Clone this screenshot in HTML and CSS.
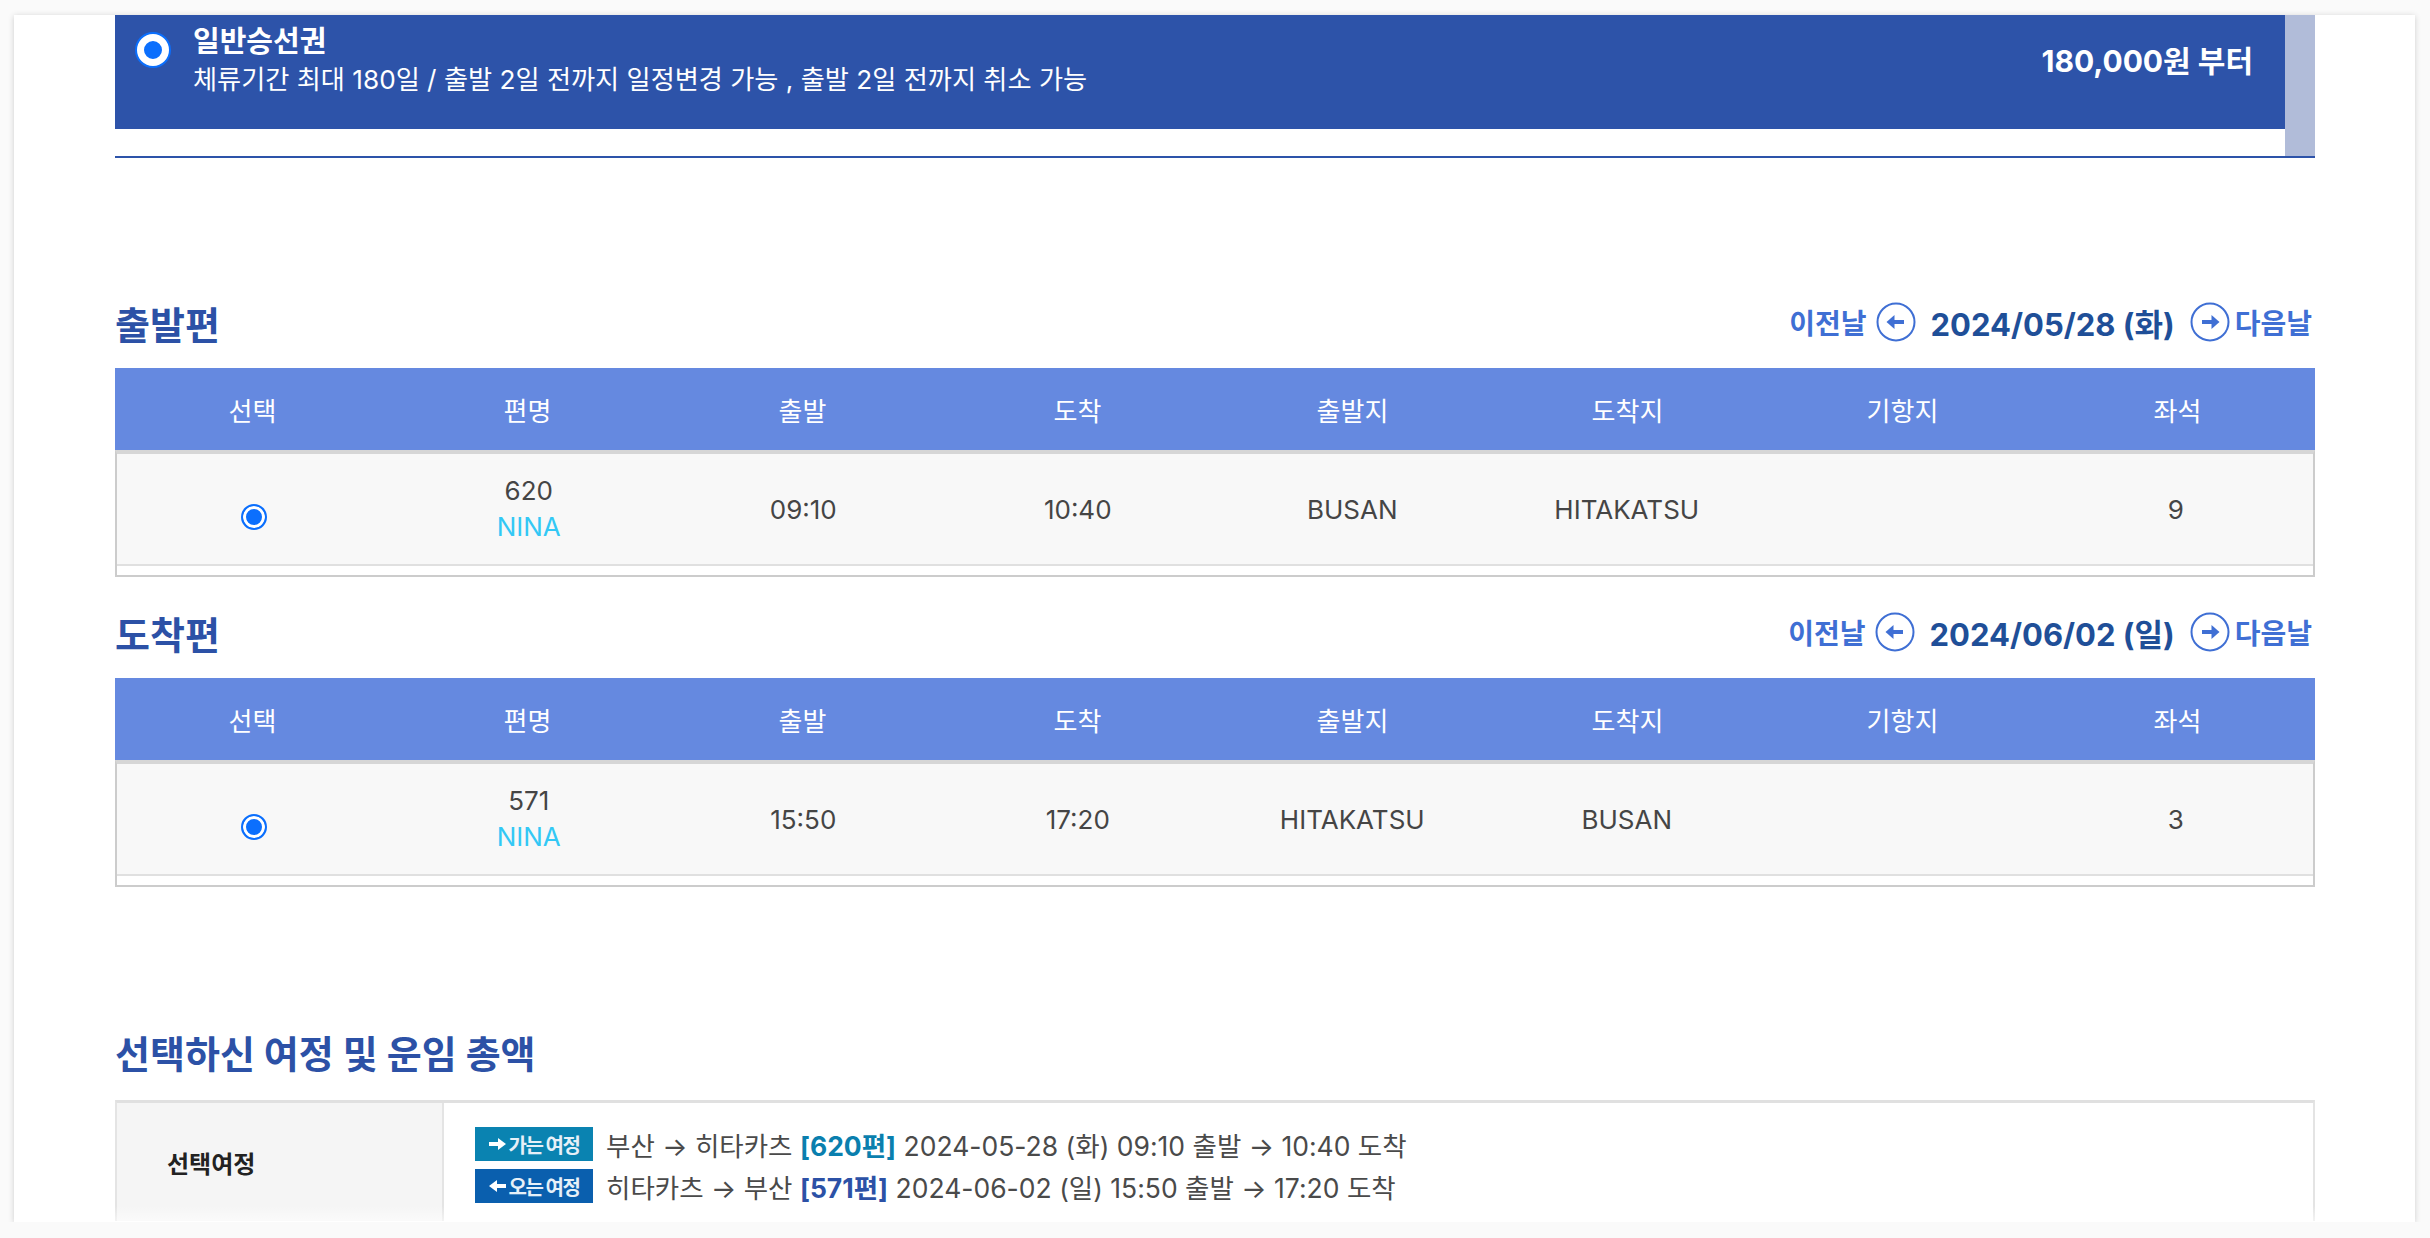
FILE: index.html
```html
<!DOCTYPE html>
<html lang="ko">
<head>
    <meta charset="UTF-8">
    <meta name="viewport" content="width=device-width, initial-scale=1.0">
    <title>승선권 예매</title>
    <link rel="stylesheet" href="styles.css">
</head>
<body>
    <div class="card">
        <div class="ticket-list">
            <div class="ticket-item">
                <span class="ticket-radio"></span>
                <div class="ticket-info">
                    <div class="ticket-title">일반승선권</div>
                    <div class="ticket-desc">체류기간 최대 180일 / 출발 2일 전까지 일정변경 가능 , 출발 2일 전까지 취소 가능</div>
                </div>
                <div class="ticket-price">180,000원 부터</div>
            </div>
            <div class="scrollbar"></div>
        </div>

        <div class="section first">
            <div class="section-head">
                <h2>출발편</h2>
                <div class="date-nav">
                    <span class="day-link prev">이전날</span>
                    <svg class="nav-icon" width="40" height="40" viewBox="0 0 40 40">
                        <circle cx="20" cy="20" r="18.5" fill="none" stroke="#3f6fd4" stroke-width="2"/>
                        <path d="M17 20H28" stroke="#3f6fd4" stroke-width="4"/>
                        <polygon points="10.5,20 18.5,13 18.5,27" fill="#3f6fd4"/>
                    </svg>
                    <span class="date">2024/05/28 (화)</span>
                    <svg class="nav-icon next" width="40" height="40" viewBox="0 0 40 40">
                        <circle cx="20" cy="20" r="18.5" fill="none" stroke="#3f6fd4" stroke-width="2"/>
                        <path d="M12 20H23" stroke="#3f6fd4" stroke-width="4"/>
                        <polygon points="29.5,20 21.5,13 21.5,27" fill="#3f6fd4"/>
                    </svg>
                    <span class="day-link">다음날</span>
                </div>
            </div>
            <div class="flight-table">
                <div class="thead">
                    <div>선택</div><div>편명</div><div>출발</div><div>도착</div>
                    <div>출발지</div><div>도착지</div><div>기항지</div><div>좌석</div>
                </div>
                <div class="tbody">
                    <div class="row">
                        <div><span class="row-radio"></span></div>
                        <div class="flight-no">620<span class="ship">NINA</span></div>
                        <div>09:10</div>
                        <div>10:40</div>
                        <div>BUSAN</div>
                        <div>HITAKATSU</div>
                        <div></div>
                        <div>9</div>
                    </div>
                </div>
            </div>
        </div>

        <div class="section">
            <div class="section-head">
                <h2>도착편</h2>
                <div class="date-nav">
                    <span class="day-link prev">이전날</span>
                    <svg class="nav-icon" width="40" height="40" viewBox="0 0 40 40">
                        <circle cx="20" cy="20" r="18.5" fill="none" stroke="#3f6fd4" stroke-width="2"/>
                        <path d="M17 20H28" stroke="#3f6fd4" stroke-width="4"/>
                        <polygon points="10.5,20 18.5,13 18.5,27" fill="#3f6fd4"/>
                    </svg>
                    <span class="date">2024/06/02 (일)</span>
                    <svg class="nav-icon next" width="40" height="40" viewBox="0 0 40 40">
                        <circle cx="20" cy="20" r="18.5" fill="none" stroke="#3f6fd4" stroke-width="2"/>
                        <path d="M12 20H23" stroke="#3f6fd4" stroke-width="4"/>
                        <polygon points="29.5,20 21.5,13 21.5,27" fill="#3f6fd4"/>
                    </svg>
                    <span class="day-link">다음날</span>
                </div>
            </div>
            <div class="flight-table">
                <div class="thead">
                    <div>선택</div><div>편명</div><div>출발</div><div>도착</div>
                    <div>출발지</div><div>도착지</div><div>기항지</div><div>좌석</div>
                </div>
                <div class="tbody">
                    <div class="row">
                        <div><span class="row-radio"></span></div>
                        <div class="flight-no">571<span class="ship">NINA</span></div>
                        <div>15:50</div>
                        <div>17:20</div>
                        <div>HITAKATSU</div>
                        <div>BUSAN</div>
                        <div></div>
                        <div>3</div>
                    </div>
                </div>
            </div>
        </div>

        <div class="section summary-section">
            <div class="section-head">
                <h2>선택하신 여정 및 운임 총액</h2>
            </div>
            <div class="summary">
                <div class="summary-label">선택여정</div>
                <div class="summary-value">
                    <div class="trip-line">
                        <span class="badge go">
                            <svg width="17" height="12" viewBox="0 0 17 12"><path d="M0 4H9V0L17 6L9 12V8H0Z" fill="#fff"/></svg>가는 여정
                        </span>
                        <span class="trip-text">부산 → 히타카츠 <b class="no-go">[620편]</b> 2024-05-28 (화) 09:10 출발 → 10:40 도착</span>
                    </div>
                    <div class="trip-line">
                        <span class="badge back">
                            <svg width="17" height="12" viewBox="0 0 17 12"><path d="M17 4H8V0L0 6L8 12V8H17Z" fill="#fff"/></svg>오는 여정
                        </span>
                        <span class="trip-text">히타카츠 → 부산 <b class="no-back">[571편]</b> 2024-06-02 (일) 15:50 출발 → 17:20 도착</span>
                    </div>
                </div>
            </div>
        </div>
    </div>
</body>
</html>
```

FILE: styles.css
```css
body {
    margin: 0;
    background-color: #fafafa;
    font-family: Inter, "Noto Sans CJK KR", sans-serif;
    color: #444;
}
.card {
    position: relative;
    margin: 15px 15px 0 14px;
    height: 1207px;
    overflow: hidden;
    background-color: #ffffff;
    box-shadow: 0 1px 6px rgba(0, 0, 0, 0.18);
    padding: 0 100px 0 101px;
    box-sizing: border-box;
}
/* soft fade where the card content is cut off */
.card::after {
    content: "";
    position: absolute;
    left: 0;
    right: 0;
    bottom: 0;
    height: 16px;
    background: linear-gradient(rgba(255, 255, 255, 0), rgba(255, 255, 255, 0.6));
}

/* selected ticket */
.ticket-list {
    display: flex;
    height: 141px;
    border-bottom: 2px solid #2d53a9;
}
.ticket-item {
    flex: 1;
    height: 114px;
    display: flex;
    align-items: flex-start;
    padding: 0 32px 0 20px;
    background-color: #2d53a9;
    color: #ffffff;
}
.scrollbar {
    width: 30px;
    background-color: #b1bcd9;
}
.ticket-radio {
    width: 32px;
    height: 32px;
    margin-top: 19px;
    flex-shrink: 0;
    border-radius: 50%;
    border: 7px solid #ffffff;
    background-color: #0b6ffd;
    box-shadow: 0 0 0 2px #0b6ffd;
    box-sizing: border-box;
    margin-left: 2px;
}
.ticket-info {
    margin-left: 24px;
    margin-top: 8px;
    flex: 1;
}
.ticket-title {
    font-size: 29px;
    font-weight: bold;
    line-height: 38px;
}
.ticket-desc {
    font-size: 26.2px;
    line-height: 36px;
    margin-top: 1px;
}
.ticket-price {
    font-size: 30px;
    font-weight: bold;
    line-height: 40px;
    margin-top: 26px;
}

/* sections */
.section {
    margin-top: 25px;
}
.section.first {
    margin-top: 134px;
}
.section.summary-section {
    margin-top: 134px;
}
.section-head {
    display: flex;
    justify-content: space-between;
    align-items: center;
    height: 60px;
    margin-bottom: 16px;
}
.section-head h2 {
    margin: 0;
    font-size: 38px;
    font-weight: bold;
    color: #2c51a6;
}
.summary-section .section-head {
    margin-bottom: 19px;
}
.date-nav {
    display: flex;
    align-items: center;
    margin-right: 3px;
}
.day-link {
    font-size: 28px;
    font-weight: bold;
    color: #3f6fd4;
}
.day-link.prev {
    margin-right: 9px;
}
.nav-icon {
    margin-right: 15px;
}
.nav-icon.next {
    margin-right: 5px;
}
.date {
    font-size: 31px;
    font-weight: bold;
    color: #1f4f98;
    margin-right: 15px;
}

/* flight tables */
.thead, .row {
    display: grid;
    grid-template-columns: repeat(8, 1fr);
    text-align: center;
}
.thead {
    height: 82px;
    align-items: center;
    background-color: #6589e0;
    color: #ffffff;
    font-size: 26px;
}
.tbody {
    border: 2px solid #cccccc;
    border-top: 4px solid #d6d6d6;
    padding-bottom: 9px;
}
.row {
    height: 110px;
    align-items: center;
    background-color: #f8f8f8;
    border-bottom: 2px solid #e0e0e0;
    font-size: 26px;
    color: #454545;
}
.row-radio {
    display: inline-block;
    width: 26px;
    height: 26px;
    margin-top: 22px;
    border-radius: 50%;
    border: 2px solid #0b6ffd;
    background-color: #0b6ffd;
    box-shadow: inset 0 0 0 3px #ffffff;
    box-sizing: border-box;
}
.flight-no {
    line-height: 36px;
}
.ship {
    display: block;
    color: #33c8f5;
}

/* summary */
.summary {
    display: flex;
    border-top: 3px solid #e0e0e0;
    border-left: 2px solid #e4e4e4;
    border-right: 2px solid #e4e4e4;
    height: 118px;
}
.summary-label {
    width: 327px;
    display: flex;
    align-items: center;
    padding-left: 50px;
    box-sizing: border-box;
    background-color: #f5f5f5;
    border-right: 2px solid #e4e4e4;
    font-size: 24px;
    font-weight: bold;
    color: #222;
}
.summary-value {
    padding: 24px 31px 0;
    display: flex;
    flex-direction: column;
    gap: 8px;
}
.trip-line {
    display: flex;
    align-items: center;
    height: 34px;
}
.badge {
    width: 118px;
    height: 34px;
    display: flex;
    align-items: center;
    justify-content: center;
    gap: 3px;
    color: #e6f0f8;
    font-size: 20px;
    font-weight: bold;
    letter-spacing: -1.5px;
}
.badge.go {
    background-color: #0a83b1;
}
.badge.back {
    background-color: #0a5fae;
}
.trip-text {
    margin-left: 13px;
    font-size: 26.5px;
    color: #4a4a4a;
}
.no-go {
    color: #0a7fae;
}
.no-back {
    color: #2c51a6;
}
```
